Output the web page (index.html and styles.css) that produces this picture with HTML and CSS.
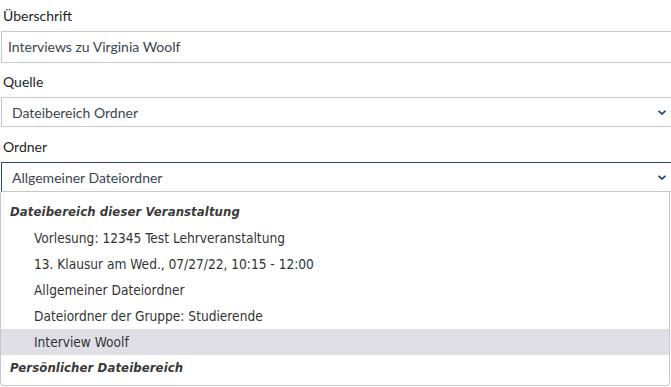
FILE: index.html
```html
<!DOCTYPE html>
<html lang="de">
<head>
    <meta charset="UTF-8">
    <meta name="viewport" content="width=device-width, initial-scale=1.0">
    <title>Ordner-Widget</title>
    <link rel="stylesheet" href="styles.css">
</head>
<body>
    <form class="widget-form">
        <div class="field field-text">
            <label class="field-label" for="title">Überschrift</label>
            <input class="text-input" type="text" id="title" value="Interviews zu Virginia Woolf">
        </div>

        <div class="field">
            <label class="field-label">Quelle</label>
            <div class="select-box">
                <span class="select-value">Dateibereich Ordner</span>
                <svg class="chevron" width="8" height="5" viewBox="0 0 8 5"><path d="M0.5 0.8 L4 4 L7.5 0.8" fill="none" stroke="#28497c" stroke-width="1.8"/></svg>
            </div>
        </div>

        <div class="field">
            <label class="field-label">Ordner</label>
            <div class="combo">
                <div class="select-box is-open">
                    <span class="select-value">Allgemeiner Dateiordner</span>
                    <svg class="chevron" width="8" height="5" viewBox="0 0 8 5"><path d="M0.5 0.8 L4 4 L7.5 0.8" fill="none" stroke="#28497c" stroke-width="1.8"/></svg>
                </div>
                <ul class="option-list">
                    <li class="option-group">Dateibereich dieser Veranstaltung</li>
                    <li class="option">Vorlesung: 12345 Test Lehrveranstaltung</li>
                    <li class="option">13. Klausur am Wed., 07/27/22, 10:15 - 12:00</li>
                    <li class="option">Allgemeiner Dateiordner</li>
                    <li class="option">Dateiordner der Gruppe: Studierende</li>
                    <li class="option is-hover">Interview Woolf</li>
                    <li class="option-group">Persönlicher Dateibereich</li>
                </ul>
            </div>
        </div>
    </form>
</body>
</html>
```

FILE: styles.css
```css
* {
    margin: 0;
    padding: 0;
    box-sizing: border-box;
}

body {
    font-family: 'Lato', sans-serif;
    background-color: #fff;
    width: 671px;
    height: 387px;
    overflow: hidden;
}

.widget-form {
    width: 681px;
    padding: 6px 0 0 1px;
}

.field {
    margin-bottom: 10px;
}

.field-text {
    margin-bottom: 9px;
}

.field-label {
    display: block;
    font-size: 14px;
    line-height: 20px;
    color: #1f1f1f;
    padding-left: 2px;
    margin-bottom: 5px;
}

.text-input {
    display: block;
    width: 100%;
    height: 32px;
    padding: 0 6px 1px;
    border: 1px solid #c5c7ca;
    font-family: 'Lato', sans-serif;
    font-size: 14px;
    color: #3c454e;
    background: #fff;
}

.select-box {
    display: flex;
    align-items: center;
    justify-content: space-between;
    height: 30px;
    padding: 0 14px 0 10px;
    border: 1px solid #c5c7ca;
    font-size: 14px;
    color: #3c454e;
}

.select-box.is-open {
    border-color: #28497c;
    border-bottom-color: #c5c7ca;
}

.chevron {
    display: block;
}

.combo {
    position: relative;
}

.option-list {
    position: absolute;
    top: 30px;
    left: -1px;
    width: 670px;
    list-style: none;
    padding: 7px 0 4px;
    background: #fff;
    border: 1px solid #c8c8cc;
    border-top: none;
    border-radius: 0 0 4px 4px;
    font-family: 'DejaVu Sans Condensed', 'DejaVu Sans', sans-serif;
    font-stretch: condensed;
    font-size: 13.6px;
    color: #333;
}

.option-list li {
    height: 26px;
    line-height: 26px;
    white-space: nowrap;
}

.option-group {
    padding-left: 9px;
    font-size: 13px;
    font-weight: bold;
    font-style: italic;
    letter-spacing: 0.1px;
    color: #3a3a3a;
}

.option {
    padding-left: 33px;
}

.option.is-hover {
    background-color: #e0dfe5;
}
```
